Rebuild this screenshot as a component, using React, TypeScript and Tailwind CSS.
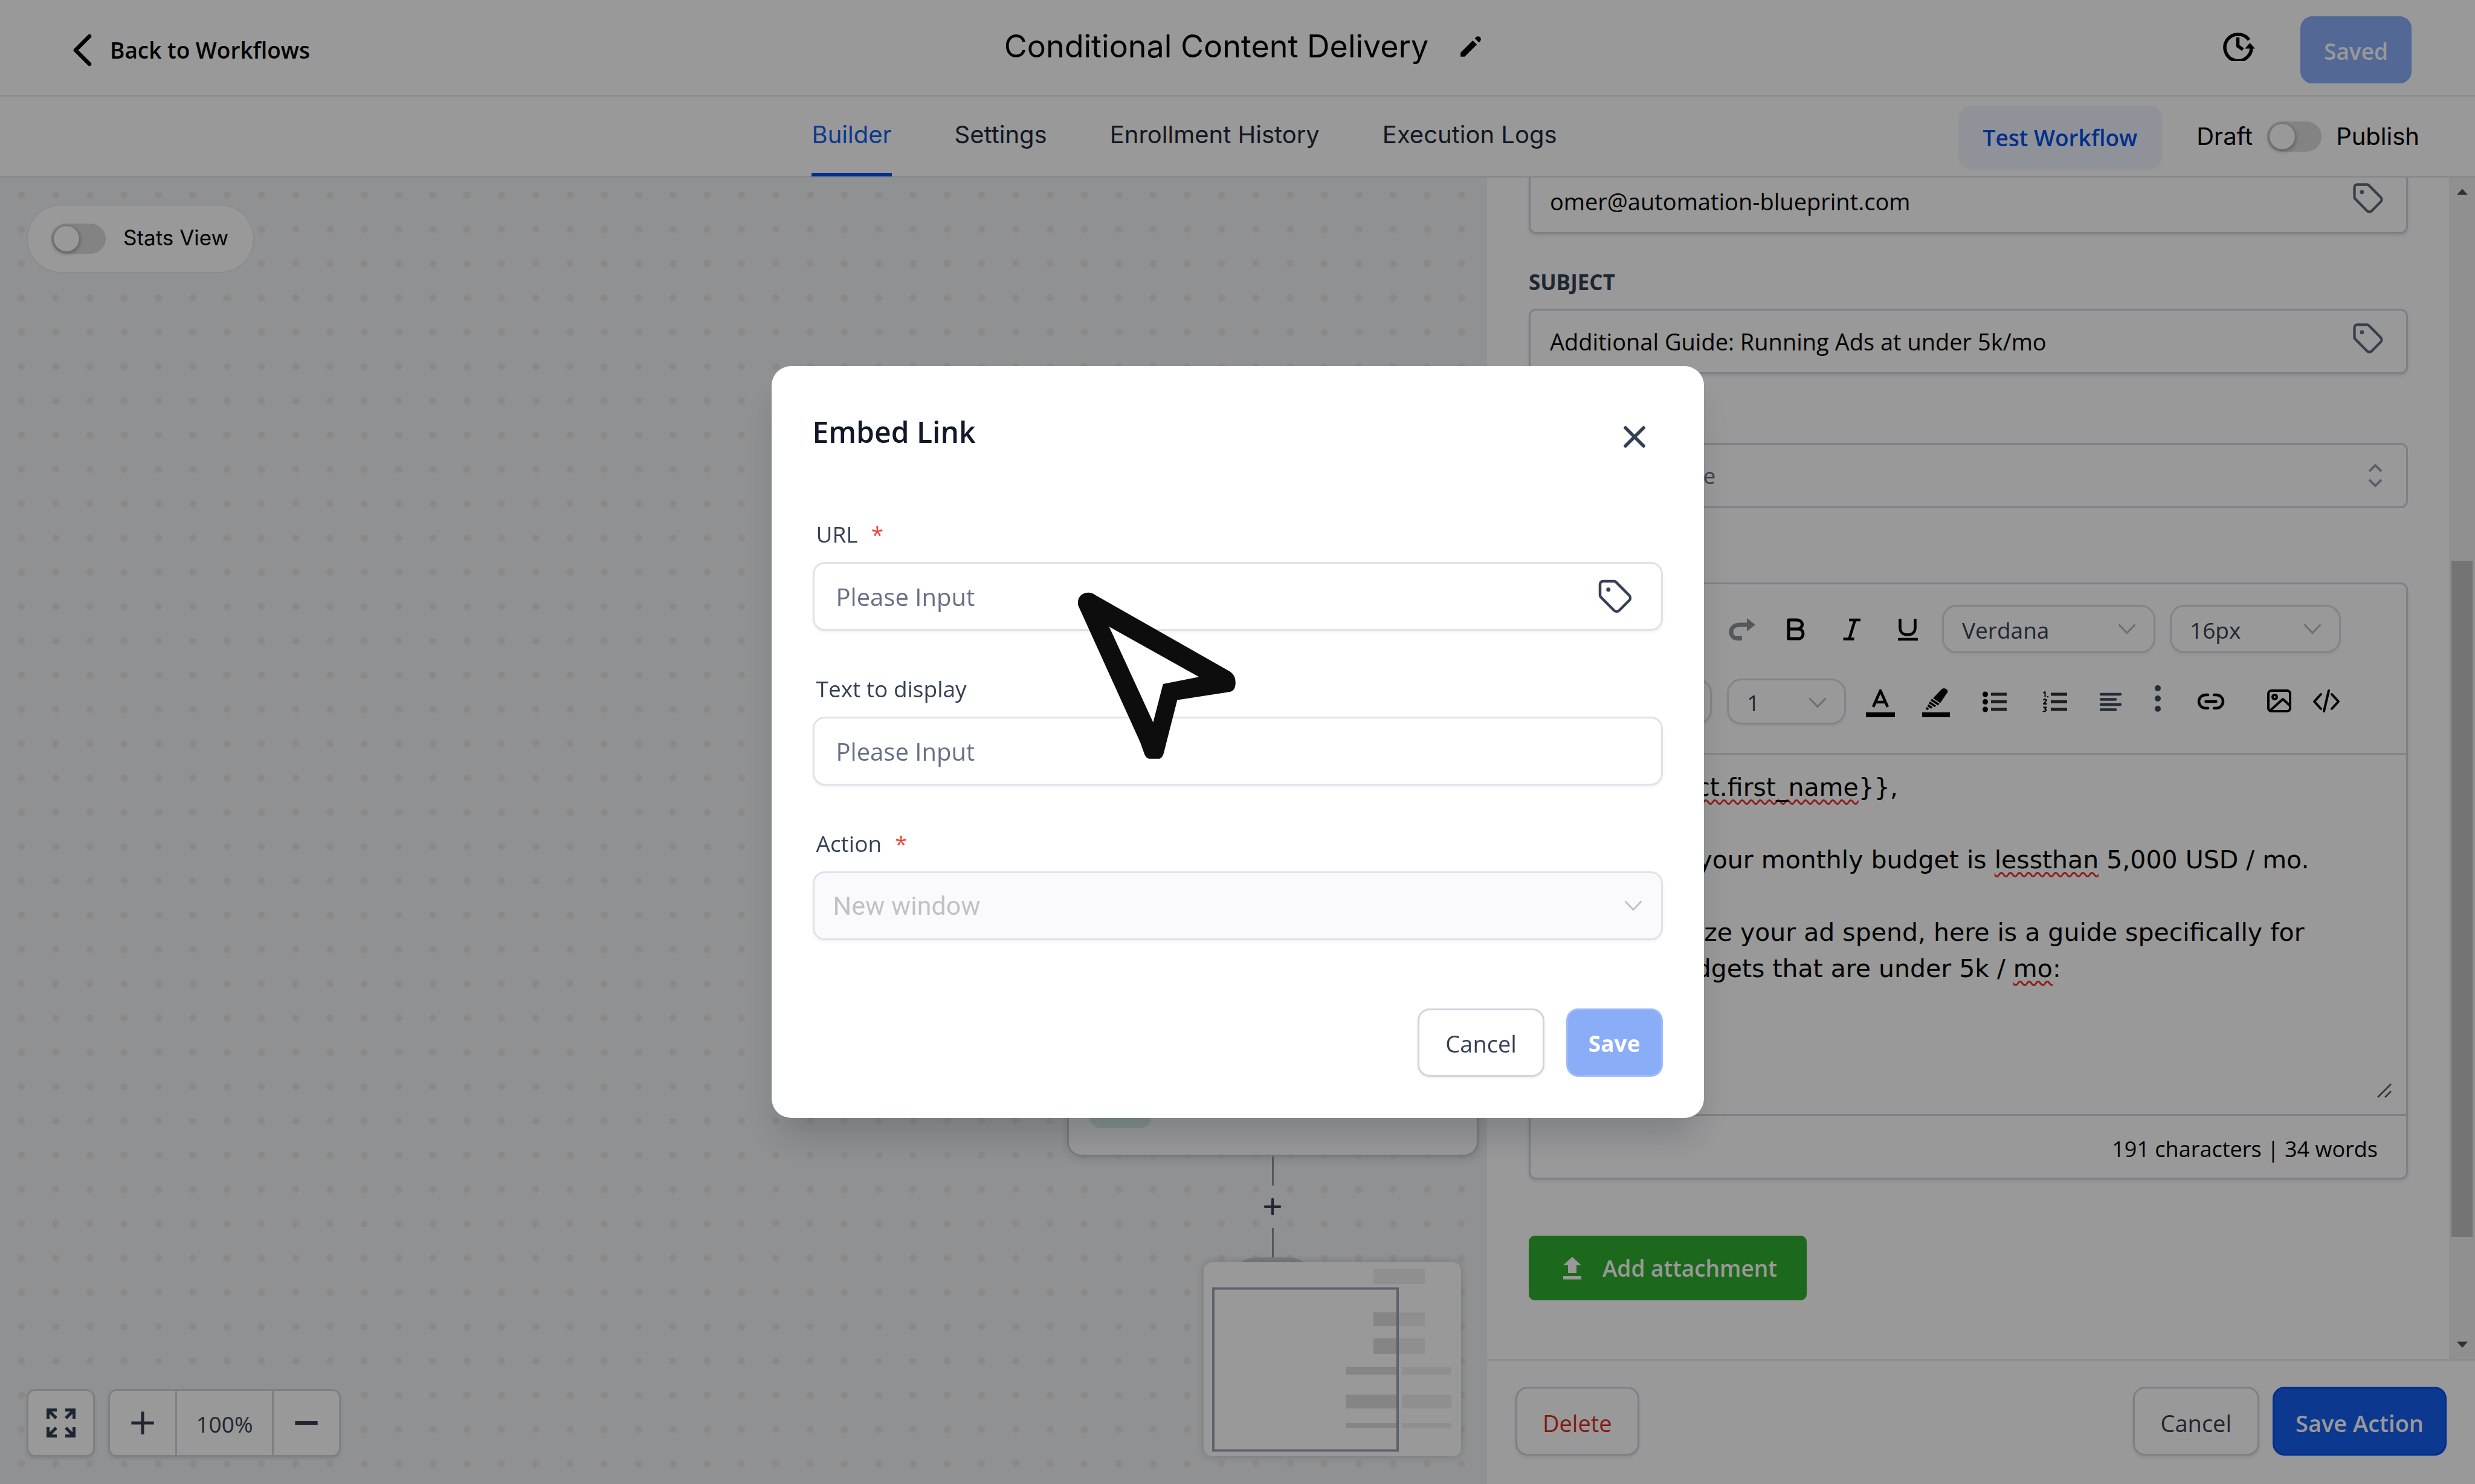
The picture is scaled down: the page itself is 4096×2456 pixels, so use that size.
import type { ReactNode } from "react";
import { HiPencil } from "react-icons/hi";
import { Tag, X, Plus, Minus } from "lucide-react";

const BORDER = "border-[3px] border-[#d0d5dd]";

function Toggle({ label }: { label: string }) {
  return (
    <button
      type="button"
      role="switch"
      aria-checked="false"
      aria-label={label}
      className="flex h-[50px] w-[90px] shrink-0 items-center rounded-full bg-[#dbdbdb] px-[4px]"
    >
      <span className="size-[42px] rounded-full bg-white shadow-[0_2px_6px_2px_rgba(0,0,0,0.25)]" />
    </button>
  );
}

function Chevron({ className }: { className: string }) {
  return (
    <svg
      viewBox="0 0 30 18"
      className={`pointer-events-none absolute h-[18px] w-[30px] ${className}`}
      fill="none"
      stroke="currentColor"
      strokeWidth="3"
    >
      <path d="M1.500 1.500 15 15.500 28.500 1.500" />
    </svg>
  );
}

function ToolSelect({ label, value, className, pad }: { label: string; value: string; className: string; pad: string }) {
  return (
    <div className={`relative shrink-0 ${className}`}>
      <select
        aria-label={label}
        defaultValue={value}
        className={`h-full w-full appearance-none rounded-[24px] border-[3px] border-[#dcdde3] bg-white pt-[3px] text-[37px] text-[#344054] shadow-[0_3px_5px_rgba(16,24,40,0.05)] ${pad}`}
      >
        <option>{value}</option>
      </select>
      <Chevron className="top-[31px] right-[32px] text-[#b8b8bc]" />
    </div>
  );
}

function Tool({ label, className = "", children }: { label: string; className?: string; children: ReactNode }) {
  return (
    <button
      type="button"
      aria-label={label}
      className={`flex size-[48px] shrink-0 items-center justify-center text-black ${className}`}
    >
      {children}
    </button>
  );
}

function Icon({ children, className = "", box = "0 0 48 48" }: { children: ReactNode; className?: string; box?: string }) {
  return (
    <svg
      viewBox={box}
      className={`size-[48px] shrink-0 overflow-visible ${className}`}
      fill="none"
      stroke="currentColor"
      strokeWidth="4"
      strokeLinecap="round"
      strokeLinejoin="round"
    >
      {children}
    </svg>
  );
}

function PanelInput({ id, label, value }: { id: string; label: string; value: string }) {
  return (
    <div className={`flex h-[108px] items-center rounded-[12px] bg-white pr-[36px] pl-[32px] shadow-[0_3px_5px_rgba(16,24,40,0.1)] ${BORDER}`}>
      <input id={id} defaultValue={value} aria-label={label} className="min-w-0 flex-1 bg-transparent text-[38px] text-black outline-none" />
      <button type="button" aria-label="Insert custom value" className="mb-[10px] text-[#5d6a80]">
        <Tag className="size-[54px]" strokeWidth={1.9} />
      </button>
    </div>
  );
}

function PanelLabel({ id, children }: { id: string; children: ReactNode }) {
  return (
    <label htmlFor={id} className="mb-[20px] block text-[35px] leading-[48px] font-bold text-[#344054]">
      {children}
    </label>
  );
}

function ModalField({ id, label, required, children }: { id: string; label: string; required?: boolean; children: ReactNode }) {
  return (
    <div className="flex flex-col gap-[20px]">
      <label htmlFor={id} className="ml-[6px] flex gap-[22px] text-[37px] leading-[52px] text-[#344054]">
        {label}
        {required && <span className="text-[#f04438]">*</span>}
      </label>
      {children}
    </div>
  );
}

function Canvas() {
  return (
    <main className="relative min-w-0 flex-1 overflow-hidden bg-[#f0f2f4]">
      <svg className="absolute inset-0 h-full w-full" aria-hidden="true">
        <defs>
          <pattern id="dots" width="56.75" height="56.75" x="7" y="0.5" patternUnits="userSpaceOnUse">
            <circle cx="28.400" cy="28.400" r="6" fill="#e6e5e3" />
          </pattern>
        </defs>
        <rect width="100%" height="100%" fill="url(#dots)" />
      </svg>

      <div className="absolute top-[46px] left-[46px] flex h-[110px] items-center gap-[29px] rounded-full bg-white pr-[41px] pl-[39px] shadow-[0_0_3px_rgba(16,24,40,0.15)]">
        <Toggle label="Stats View" />
        <span className="pb-[3px] font-[Inter,sans-serif] text-[35px] text-black">Stats View</span>
      </div>

      <div className="absolute right-[14px] bottom-[295px] flex w-[681px] flex-col items-center">
        <div className="flex h-[230px] w-full items-end rounded-[24px] border-[3px] border-[#c8cdd6] bg-white px-[34px] pb-[44px] shadow-[0_4px_16px_rgba(16,24,40,0.12)]">
          <span className="size-[102px] rounded-[18px] bg-[#d8f0e5]" />
        </div>
        <span className="h-[48px] w-[3px] bg-[#8f9196]" />
        <button type="button" aria-label="Add step" className="my-[14px] text-[#344054]">
          <Plus className="size-[42px]" strokeWidth={2.4} />
        </button>
        <span className="h-[49px] w-[3px] bg-[#8f9196]" />
        <span className="h-[80px] w-[136px] rounded-full bg-[#cdced3]" />
      </div>

      <svg
        viewBox="0 0 426 321"
        className="absolute right-[43px] bottom-[46px] h-[321px] w-[426px] rounded-[14px] bg-white shadow-[0_0_14px_rgba(16,24,40,0.2)]"
        aria-label="Minimap"
      >
        <g fill="#eeeeee">
          <rect x="281" y="11" width="85" height="25" />
          <rect x="281" y="83" width="85" height="23" />
          <rect x="281" y="126" width="85" height="26" />
          <rect x="328" y="173" width="82" height="13" />
          <rect x="328" y="219" width="82" height="23" />
          <rect x="328" y="266" width="82" height="8" />
        </g>
        <g fill="#dedede">
          <rect x="281" y="83" width="40" height="23" />
          <rect x="281" y="126" width="40" height="26" />
          <rect x="235" y="173" width="86" height="13" />
          <rect x="235" y="219" width="86" height="23" />
          <rect x="235" y="266" width="86" height="8" />
        </g>
        <rect x="16" y="43.500" width="305" height="268" fill="none" stroke="#98a4b8" strokeWidth="4" />
      </svg>

      <div className="absolute bottom-[45px] left-[44px] flex h-[112px] gap-[22px]">
        <button
          type="button"
          aria-label="Fit to screen"
          className={`flex w-[113px] items-center justify-center rounded-[14px] bg-white text-[#2d3d52] shadow-[0_3px_5px_rgba(16,24,40,0.1)] ${BORDER}`}
        >
          <svg viewBox="0 0 48 48" className="size-[48px]" fill="none" stroke="currentColor" strokeWidth="5">
            <path d="M17 2.500H2.500V17M31 2.500h14.500V17M17 45.500H2.500V31M31 45.500h14.500V31M3 3l13 13M45 3 32 16M3 45l13-13M45 45 32 32" />
          </svg>
        </button>
        <div className={`flex overflow-hidden rounded-[14px] bg-white text-[#344054] shadow-[0_3px_5px_rgba(16,24,40,0.1)] ${BORDER}`}>
          <button type="button" aria-label="Zoom in" className="flex w-[108px] items-center justify-center">
            <Plus className="size-[64px]" strokeWidth={1.9} strokeLinecap="butt" />
          </button>
          <span className="flex w-[163px] items-center justify-center border-x-[3px] border-[#d0d5dd] pt-[4px] text-[37px]">100%</span>
          <button type="button" aria-label="Zoom out" className="flex w-[108px] items-center justify-center">
            <Minus className="size-[64px]" strokeWidth={2.2} strokeLinecap="butt" />
          </button>
        </div>
      </div>
    </main>
  );
}

function Toolbar() {
  return (
    <div className="flex flex-col gap-[42px] border-b-[3px] border-[#dcdde3] pt-[34px] pb-[47px]">
      <div className="flex h-[80px] items-center justify-end pr-[108px]">
        <Tool label="Redo">
          <Icon className="text-[#8d929c]">
            <path d="M36 17H23C13 17 8 22 8 29c0 6 4 10.500 10 10.500h8" strokeWidth="7" strokeLinecap="butt" />
            <path d="M34 6v22l14-11z" fill="currentColor" stroke="none" />
          </Icon>
        </Tool>
        <Tool label="Bold" className="ml-[44px]">
          <Icon>
            <path d="M11 9h14c5 0 8.500 3.500 8.500 7.500S30 24 25 24H11zM11 24h16c5 0 8 3.500 8 8s-3 8-8 8H11z" strokeWidth="5" />
          </Icon>
        </Tool>
        <Tool label="Italic" className="ml-[44px]">
          <Icon>
            <path d="M19 9h19M9.500 40.500h18M29 9 19.500 40" strokeWidth="4.500" strokeLinecap="butt" />
          </Icon>
        </Tool>
        <Tool label="Underline" className="ml-[44px]">
          <Icon>
            <path d="M11.500 7v15c0 7 4.500 11.500 12.500 11.500s12.500-4.500 12.500-11.500V7M8 41h33" strokeWidth="4.500" strokeLinecap="butt" />
          </Icon>
        </Tool>
        <ToolSelect label="Font family" value="Verdana" pad="pl-[30px]" className="ml-[33px] h-[80px] w-[353px]" />
        <ToolSelect label="Font size" value="16px" pad="pl-[30px]" className="ml-[24px] h-[80px] w-[283px]" />
      </div>
      <div className="flex h-[76px] items-center pl-[36px]">
        <ToolSelect label="Text style" value="Paragraph" pad="pl-[30px]" className="h-[76px] w-[264px]" />
        <ToolSelect label="Line height" value="1" pad="pl-[30px]" className="ml-[25px] h-[76px] w-[197px]" />
        <Tool label="Text colour" className="ml-[33px]">
          <Icon>
            <path d="M12 33 24 6l12 27M16 25h16" strokeLinecap="butt" strokeWidth="4.500" />
            <path d="M0 46h48" strokeWidth="8" strokeLinecap="butt" />
          </Icon>
        </Tool>
        <Tool label="Highlight colour" className="ml-[44px]">
          <Icon>
            <path d="M33 4c3-4 11-1 10.500 4L31 26.500 19 18.500z" fill="currentColor" stroke="none" />
            <path d="M16 21 28.500 29M13 25.500l10 6.500M10.500 30l6.500 4.500M7.500 35l4 1.500" strokeWidth="3.500" strokeLinecap="butt" />
            <path d="M1 46h46" strokeWidth="8" strokeLinecap="butt" />
          </Icon>
        </Tool>
        <Tool label="Bulleted list" className="ml-[49px]">
          <Icon>
            <path d="M18 12h26M18 24.500h26M18 37h26" strokeWidth="5" strokeLinecap="butt" stroke="#333333" />
            <g fill="currentColor" stroke="none">
              <circle cx="8.500" cy="12" r="4.500" />
              <circle cx="8.500" cy="24.500" r="4.500" />
              <circle cx="8.500" cy="37" r="4.500" />
            </g>
          </Icon>
        </Tool>
        <Tool label="Numbered list" className="ml-[52px]">
          <Icon>
            <path d="M17 12h27M17 24.500h27M17 37h27" strokeWidth="5" strokeLinecap="butt" stroke="#333333" />
            <path d="M5 9.500 7.500 8v8M5 21.500c1-2 5-1.500 4.500 1L5 28h5M5 33.500h4.500l-2.500 3c3 0 3.500 4-2.500 4" strokeWidth="2" />
            <circle cx="12" cy="16" r="1.300" fill="currentColor" stroke="none" />
          </Icon>
        </Tool>
        <Tool label="Align" className="ml-[44px]">
          <Icon className="text-[#3c4a60]">
            <path d="M8 12h32M8 20.500h24M8 29h32M8 37.500h24" strokeWidth="4.500" />
          </Icon>
        </Tool>
        <Tool label="More" className="ml-[30px]">
          <Icon className="text-[#3c4a60]">
            <g fill="currentColor" stroke="none">
              <circle cx="24" cy="2" r="5" />
              <circle cx="24" cy="19" r="5" />
              <circle cx="24" cy="36" r="5" />
            </g>
          </Icon>
        </Tool>
        <Tool label="Insert link" className="ml-[40px]">
          <Icon>
            <path d="M19 13h-4a11 11 0 0 0 0 22h4M29 13h4a11 11 0 0 1 0 22h-4M15.500 24h17" strokeWidth="4.500" />
          </Icon>
        </Tool>
        <Tool label="Insert image" className="ml-[65px]">
          <Icon>
            <rect x="6" y="6" width="36" height="34" rx="5" />
            <circle cx="16.500" cy="16.500" r="3.500" />
            <path d="M9 39 30 20l12 11" />
          </Icon>
        </Tool>
        <Tool label="Source code" className="ml-[30px]">
          <Icon>
            <path d="M15 12 4 24l11 12M33 12l11 12-11 12M28 6l-8 34" />
          </Icon>
        </Tool>
      </div>
    </div>
  );
}

function Typo({ children }: { children: ReactNode }) {
  return (
    <span className="underline decoration-[#f03030] decoration-wavy decoration-[3px] underline-offset-[6px] [text-decoration-skip-ink:none]">
      {children}
    </span>
  );
}

function Editor() {
  return (
    <div className={`rounded-[12px] bg-white shadow-[0_3px_5px_rgba(16,24,40,0.1)] ${BORDER}`}>
      <Toolbar />
      <div
        role="textbox"
        aria-label="Message"
        className="relative h-[595px] overflow-hidden pt-[24px] pr-[60px] pl-[39px] font-['DejaVu_Sans',sans-serif] text-[41px] leading-[60px] whitespace-nowrap text-black"
      >
        <p>
          Hi, {"{{"}
          <Typo>contact.first_name</Typo>
          {"}},"}
        </p>
        <p className="mt-[60px]">
          I think that your monthly budget is <Typo>lessthan</Typo> 5,000 USD / mo.
        </p>
        <p className="mt-[60px]">
          So to optimize your ad spend, here is a guide specifically for
          <br />
          monthly budgets that are under 5k / <Typo>mo</Typo>:
        </p>
        <svg viewBox="0 0 24 24" className="absolute right-[24px] bottom-[27px] size-[24px]" stroke="#555555" strokeWidth="2.500">
          <path d="M1 23 23 1M13 23 23 13" />
        </svg>
      </div>
      <p className="flex h-[105px] items-center justify-end border-t-[3px] border-[#d0d5dd] pt-[8px] pr-[47px] text-[36px] text-black">
        191 characters | 34 words
      </p>
    </div>
  );
}

function SidePanel() {
  return (
    <aside className="flex w-[39.920%] shrink-0 flex-col bg-white">
      <div className="flex min-h-0 flex-1">
        <div className="min-w-0 flex-1 overflow-hidden pr-[68px] pl-[69px]">
          <div className="-mt-[15px] flex flex-col">
            <PanelInput id="from-email" label="From email" value="omer@automation-blueprint.com" />
            <div className="mt-[56px]">
              <PanelLabel id="subject">SUBJECT</PanelLabel>
              <PanelInput id="subject" label="Subject" value="Additional Guide: Running Ads at under 5k/mo" />
            </div>
            <div className="mt-[46px]">
              <PanelLabel id="template">TEMPLATES</PanelLabel>
              <div className="relative">
                <select
                  id="template"
                  defaultValue="Select template"
                  className={`h-[108px] w-full appearance-none rounded-[12px] bg-white pl-[40px] text-[37px] text-[#667085] ${BORDER}`}
                >
                  <option>Select template</option>
                </select>
                <svg
                  viewBox="0 0 24 40"
                  className="pointer-events-none absolute top-[34px] right-[42px] h-[40px] w-[24px]"
                  fill="none"
                  stroke="#98a2b3"
                  strokeWidth="4"
                >
                  <path d="M2 13 12 3l10 10M2 27l10 10 10-10" />
                </svg>
              </div>
            </div>
            <div className="mt-[55px]">
              <p className="mb-[20px] text-[35px] leading-[48px] font-bold text-[#344054]">MESSAGE</p>
              <Editor />
            </div>
            <button
              type="button"
              className="mt-[93px] flex h-[107px] items-center gap-[34px] self-start rounded-[10px] bg-[#2fad2f] pr-[49px] pl-[56px] text-[37px] font-semibold text-white"
            >
              <svg viewBox="0 0 32 38" className="h-[38px] w-[32px]" fill="currentColor">
                <path d="M16 0 31 14H23v13H9V14H1zM1 32h30v5.500H1z" />
              </svg>
              Add attachment
            </button>
          </div>
        </div>
        <div className="flex w-[43px] flex-col items-center bg-[#f1f1f1] pt-[18px] pb-[18px]" aria-hidden="true">
          <svg viewBox="0 0 18 10" className="h-[11px] w-[18px]" fill="#505050">
            <path d="M0 10 9 0l9 10z" />
          </svg>
          <span className="flex-[605]" />
          <span className="w-[35px] flex-[1120] bg-[#c1c1c1]" />
          <span className="flex-[173]" />
          <svg viewBox="0 0 18 10" className="h-[11px] w-[18px]" fill="#505050">
            <path d="M0 0 9 10l9-10z" />
          </svg>
        </div>
      </div>
      <footer className="flex items-center border-t-[3px] border-[#eaecf0] px-[47px] pt-[43px] pb-[47px] text-[38px] font-medium">
        <button type="button" className={`h-[114px] rounded-[20px] px-[42px] pt-[6px] text-[#d92d20] shadow-[0_3px_5px_rgba(16,24,40,0.1)] ${BORDER}`}>
          Delete
        </button>
        <button type="button" className={`ml-auto h-[114px] rounded-[20px] px-[43px] pt-[6px] text-[#344054] shadow-[0_3px_5px_rgba(16,24,40,0.1)] ${BORDER}`}>
          Cancel
        </button>
        <button type="button" className="ml-[22px] h-[114px] rounded-[20px] border-[3px] border-[#004eeb] bg-[#155eef] px-[35px] pt-[6px] font-semibold text-white">
          Save Action
        </button>
      </footer>
    </aside>
  );
}

function Header() {
  return (
    <header className="shrink-0 bg-white font-[Inter,sans-serif] text-black">
      <div className="grid h-[160px] grid-cols-[1fr_auto_1fr] items-center border-b-[3px] border-[#eaecf0]">
        <a href="#workflows" className="flex items-center gap-[30px] justify-self-start pt-[8px] pl-[120px] font-['Open_Sans',sans-serif] text-[37px] font-semibold">
          <svg viewBox="0 0 32 54" className="h-[54px] w-[32px]" fill="none" stroke="currentColor" strokeWidth="6.500" strokeLinecap="round" strokeLinejoin="round">
            <path d="M28 4 5 27l23 23" />
          </svg>
          Back to Workflows
        </a>
        <div className="flex items-center gap-[46px] pb-[4px] pl-[24px]">
          <h1 className="text-[52px] leading-[64px]">Conditional Content Delivery</h1>
          <button type="button" aria-label="Rename workflow">
            <HiPencil className="size-[48px]" />
          </button>
        </div>
        <div className="flex items-center gap-[74px] justify-self-end pt-[8px] pr-[105px]">
          <button type="button" aria-label="Version history" className="mb-[14px]">
            <svg viewBox="0 0 54 50" className="h-[50px] w-[54px]" fill="none" stroke="currentColor" strokeWidth="5.500">
              <path d="M43 15A22 22 0 1 0 47 27" />
              <path d="M24.500 11v14l8.500 6" />
              <path d="M36 29.500h17L44.500 20z" fill="currentColor" stroke="none" />
            </svg>
          </button>
          <button
            type="button"
            disabled
            className="h-[111px] rounded-[20px] border-[3px] border-[#84adff] bg-[#8badf9] px-[36px] pt-[4px] font-['Open_Sans',sans-serif] text-[37px] font-semibold text-white"
          >
            Saved
          </button>
        </div>
      </div>
      <div className="flex h-[134px] items-stretch border-b-[3px] border-[#e4e7ec] pr-[92px] pl-[32.800%]">
        <nav className="flex gap-[104px] text-[40px] text-[#1d2939]">
          <a href="#builder" className="-mb-[1px] border-b-[6px] border-[#004eeb] pt-[37px] leading-[52px] text-[#155eef]">
            Builder
          </a>
          <a href="#settings" className="pt-[37px] leading-[52px]">Settings</a>
          <a href="#history" className="pt-[37px] leading-[52px]">Enrollment History</a>
          <a href="#logs" className="pt-[37px] leading-[52px]">Execution Logs</a>
        </nav>
        <div className="ml-auto flex items-center text-[40px]">
          <button
            type="button"
            className="mr-[58px] h-[102px] rounded-[20px] bg-[#eff4ff] px-[40px] pt-[4px] font-['Open_Sans',sans-serif] text-[37px] font-semibold text-[#004eeb] shadow-[0_3px_5px_rgba(16,24,40,0.06)]"
          >
            Test Workflow
          </button>
          <span className="mr-[24px]">Draft</span>
          <Toggle label="Publish workflow" />
          <span className="ml-[24px]">Publish</span>
        </div>
      </div>
    </header>
  );
}

function EmbedLinkModal() {
  const field = "h-[114px] w-full rounded-[20px] border-[3px] border-[#e1e2e8] shadow-[0_3px_5px_rgba(16,24,40,0.05)]";
  return (
    <div className="fixed inset-0 flex items-center justify-center bg-black/40">
      <div
        role="dialog"
        aria-modal="true"
        aria-labelledby="embed-title"
        className="relative w-[1543px] max-w-full rounded-[32px] bg-white px-[68px] pt-[76px] pb-[68px] shadow-[0_40px_60px_-12px_rgba(16,24,40,0.2)]"
      >
        <div className="mb-[110px] flex items-end justify-between pr-[22px]">
          <h2 id="embed-title" className="text-[48px] leading-[66px] font-semibold text-[#101828]">Embed Link</h2>
          <button type="button" aria-label="Close" className="flex size-[50px] items-center justify-center text-[#344054]">
            <X className="size-[60px] shrink-0" strokeWidth={2.2} />
          </button>
        </div>
        <form className="flex flex-col gap-[70px]">
          <ModalField id="url" label="URL" required>
            <div className="relative">
              <input id="url" placeholder="Please Input" className={`${field} pr-[120px] pl-[36px] text-[40px] placeholder:text-[#667085]`} />
              <button type="button" aria-label="Insert custom value" className="absolute top-[27px] right-[49px] text-[#344054]">
                <Tag className="size-[60px]" strokeWidth={1.8} />
              </button>
            </div>
          </ModalField>
          <ModalField id="text" label="Text to display">
            <input id="text" placeholder="Please Input" className={`${field} px-[36px] text-[40px] placeholder:text-[#667085]`} />
          </ModalField>
          <ModalField id="action" label="Action" required>
            <div className="relative">
              <select
                id="action"
                disabled
                defaultValue="New window"
                className={`${field} appearance-none bg-[#fafafc] pl-[31px] font-[Roboto,sans-serif] text-[43px] text-[#c2c2c2] opacity-100`}
              >
                <option>New window</option>
              </select>
              <Chevron className="top-[48px] right-[34px] text-[#c2c2c2]" />
            </div>
          </ModalField>
        </form>
        <div className="mt-[113px] flex justify-end gap-[36px]">
          <button type="button" className={`h-[113px] rounded-[20px] bg-white px-[43px] pt-[3px] text-[38px] font-medium text-[#344054] shadow-[0_3px_5px_rgba(16,24,40,0.05)] ${BORDER}`}>
            Cancel
          </button>
          <button type="button" disabled className="h-[113px] rounded-[20px] border-[3px] border-[#9db9fa] bg-[#8aadf8] px-[34px] pt-[3px] text-[37px] font-bold text-white">
            Save
          </button>
        </div>
        <svg viewBox="0 0 268 280" className="pointer-events-none absolute top-[372px] left-[504px] h-[280px] w-[268px]" aria-hidden="true">
          <path
            fill="#0d0d0d"
            d="M3.300 24C1 12 8 3 20.700 2.800 25 2.800 29 4.500 32 7L254 133C262 138 264 146 263.700 153 263.500 160 261 165 255.500 166.800L167.300 180.600 145 268C143 275 140 277.800 136.600 277.800H122.200C118 277.800 115 275 113 270L105.800 250Z"
          />
          <path fill="#ffffff" d="M54.600 59.200 203.200 142.300 143.800 153.900 127.400 217.600Z" />
        </svg>
      </div>
    </div>
  );
}

export default function App() {
  return (
    <div className="flex h-screen min-h-[2000px] flex-col overflow-hidden bg-white font-['Open_Sans','Noto_Sans',sans-serif]">
      <Header />
      <div className="flex min-h-0 flex-1">
        <Canvas />
        <SidePanel />
      </div>
      <EmbedLinkModal />
    </div>
  );
}
